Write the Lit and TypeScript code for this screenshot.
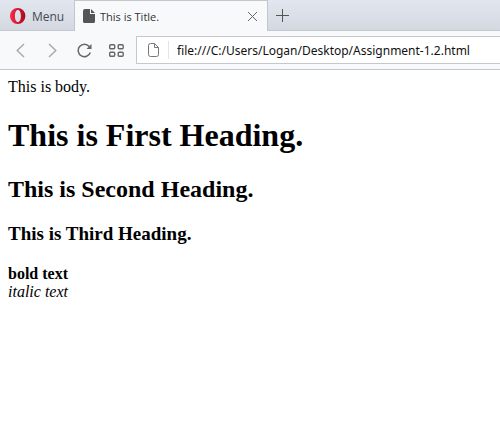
import { LitElement, html, css } from "lit";
import { customElement, state } from "lit/decorators.js";

@customElement("browser-chrome")
class BrowserChrome extends LitElement {
  static styles = css`
    :host {
      display: block;
      font-family: "Open Sans", "Noto Sans", sans-serif;
      color: #333;
    }
    button {
      display: flex;
      align-items: center;
      justify-content: center;
      flex: none;
      margin: 0;
      padding: 0;
      border: 0;
      background: none;
      font: inherit;
      color: inherit;
    }
    svg {
      display: block;
      flex: none;
      fill: none;
    }
    .tabs {
      display: flex;
      height: 31px;
      box-sizing: border-box;
      background: linear-gradient(#e2e6ee, #d4d9e1);
      border-bottom: 1px solid #c5c9cf;
      font-size: 12px;
    }
    .menu {
      gap: 6px;
      width: 74px;
      height: 30px;
      padding-top: 2px;
      box-sizing: border-box;
      color: #444b55;
    }
    .tab {
      display: flex;
      align-items: center;
      width: 194px;
      height: 31px;
      padding: 0 9px 0 8px;
      box-sizing: border-box;
      border: solid #c3c7cc;
      border-width: 1px 1px 0;
      background: #f8f9fb;
    }
    .title {
      flex: 1;
      padding-left: 5px;
      font-size: 11px;
    }
    .new {
      width: 28px;
      height: 30px;
    }
    .bar {
      display: flex;
      align-items: center;
      height: 39px;
      box-sizing: border-box;
      padding-left: 4px;
      background: #f8f9fb;
      border-bottom: 1px solid #c6c8cb;
    }
    .nav {
      width: 32px;
      height: 28px;
    }
    .address {
      display: flex;
      align-items: center;
      flex: 1;
      height: 28px;
      box-sizing: border-box;
      margin-left: 4px;
      padding-left: 11px;
      border: solid #c6c8cb;
      border-width: 1px 0 1px 1px;
      background: #fff;
    }
    .address input {
      flex: 1;
      min-width: 0;
      height: 16px;
      margin: 0 0 0 9px;
      padding: 2px 0 0 8px;
      border: 0;
      border-left: 1px solid #e4e4e4;
      outline: 0;
      background: none;
      font: 12px/16px "Noto Sans", "Open Sans", sans-serif;
      color: #111;
    }
  `;

  @state() private address = "file:///C:/Users/Logan/Desktop/Assignment-1.2.html";

  render() {
    return html`
      <div class="tabs">
        <button class="menu">
          <svg width="16" height="16" viewBox="0 0 16 16">
            <defs>
              <linearGradient id="ring" x1="0" y1="0" x2="1" y2="0">
                <stop offset="0" stop-color="#f5304a" />
                <stop offset="0.5" stop-color="#d8132f" />
                <stop offset="1" stop-color="#a00f22" />
              </linearGradient>
            </defs>
            <path fill="url(#ring)" fill-rule="evenodd"
              d="M7.700 0a7.700 8 0 1 1 0 16A7.700 8 0 0 1 7.700 0ZM7.900 2C6 2 4.900 4.600 4.900 8s1.100 6 3 6S10.900 11.400 10.900 8 9.800 2 7.900 2Z" />
          </svg>
          <span>Menu</span>
        </button>
        <div class="tab">
          <svg width="12" height="14" viewBox="0 0 12 14">
            <path fill="#555" d="M2 0h5v5h5v7.500q0 1.500-1.500 1.500h-9Q0 14 0 12.500V2Q0 0 2 0ZM8 0l4 4H8Z" />
          </svg>
          <span class="title">This is Title.</span>
          <button aria-label="Close tab">
            <svg width="11" height="11" viewBox="0 0 11 11" stroke="#666">
              <path d="m1 1 9 9M10 1l-9 9" />
            </svg>
          </button>
        </div>
        <button class="new" aria-label="New tab">
          <svg width="13" height="13" viewBox="0 0 13 13" stroke="#555">
            <path d="M6.500 0v13M0 6.500h13" />
          </svg>
        </button>
      </div>
      <div class="bar">
        <button class="nav" aria-label="Back">
          <svg width="9" height="15" viewBox="0 0 9 15" stroke="#a6a8ab" stroke-width="1.400">
            <path d="M8 1 1.200 7.500 8 14" />
          </svg>
        </button>
        <button class="nav" aria-label="Forward">
          <svg width="9" height="15" viewBox="0 0 9 15" stroke="#a6a8ab" stroke-width="1.400">
            <path d="M1 1l6.800 6.500L1 14" />
          </svg>
        </button>
        <button class="nav" aria-label="Reload">
          <svg width="15" height="15" viewBox="0 0 15 15">
            <path stroke="#666" stroke-width="1.500" d="M12.200 3.600A6.200 6.200 0 1 0 13.300 9.500" />
            <path fill="#666" d="M14.500 1v5h-5Z" />
          </svg>
        </button>
        <button class="nav" aria-label="Speed Dial">
          <svg width="15" height="13" viewBox="0 0 15 13" stroke="#666" stroke-width="1.400">
            <rect x="0.700" y="0.700" width="5" height="4" rx="1" />
            <rect x="9.200" y="0.700" width="5" height="4" rx="1" />
            <rect x="0.700" y="8.200" width="5" height="4" rx="1" />
            <rect x="9.200" y="8.200" width="5" height="4" rx="1" />
          </svg>
        </button>
        <div class="address">
          <svg width="11" height="14" viewBox="0 0 11 14" stroke="#777">
            <path d="M6.500.5h-4q-2 0-2 2v9q0 2 2 2h6q2 0 2-2v-7Zm0 0v4h4" />
          </svg>
          <input type="text" aria-label="Address" spellcheck="false" .value=${this.address} />
        </div>
      </div>
    `;
  }
}

@customElement("app-root")
class AppRoot extends LitElement {
  static styles = css`
    :host {
      display: block;
      min-height: 100vh;
      background: #fff;
    }
    .page {
      padding: 8px;
      font: 16px/18px "Liberation Serif", "Times New Roman", serif;
      color: #000;
    }
    h1 {
      margin: 21px 0;
      font-size: 32px;
      line-height: 37px;
    }
    h2 {
      margin: 20px 0;
      font-size: 24px;
      line-height: 28px;
    }
    h3 {
      margin: 20px 0;
      font-size: 19px;
      line-height: 22px;
    }
  `;

  render() {
    return html`
      <browser-chrome></browser-chrome>
      <main class="page">
        This is body.
        <h1>This is First Heading.</h1>
        <h2>This is Second Heading.</h2>
        <h3>This is Third Heading.</h3>
        <b>bold text</b><br />
        <i>italic text</i>
      </main>
    `;
  }
}
